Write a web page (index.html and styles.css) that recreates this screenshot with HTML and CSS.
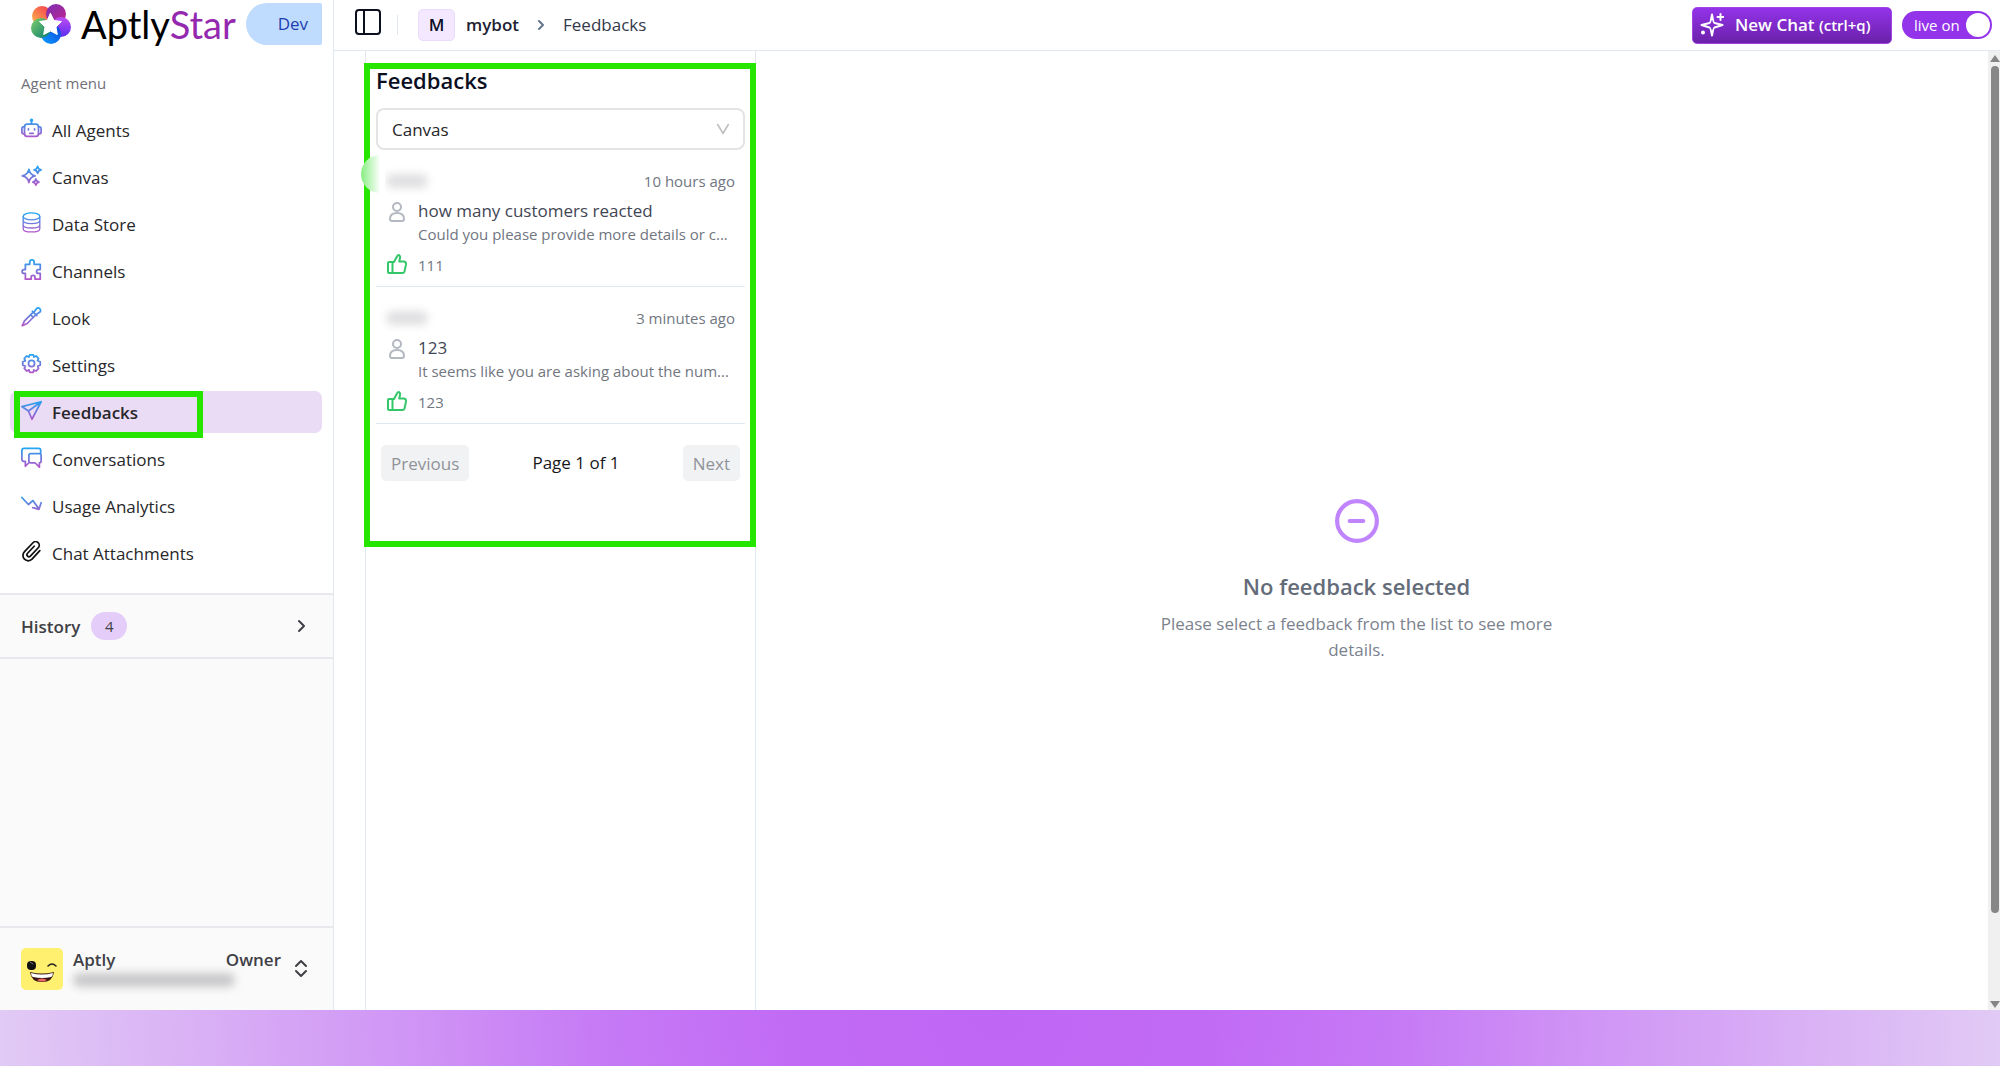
FILE: index.html
```
<!DOCTYPE html>
<html lang="en">
<head>
    <meta charset="UTF-8">
    <meta name="viewport" content="width=device-width, initial-scale=1.0">
    <title>AptlyStar - Feedbacks</title>
    <link rel="stylesheet" href="styles.css">
</head>
<body>
    <!-- Shared gradients for the menu icons -->
    <svg class="defs" width="0" height="0" aria-hidden="true">
        <defs>
            <linearGradient id="menuGrad" gradientUnits="userSpaceOnUse" x1="12" y1="1" x2="12" y2="23">
                <stop offset="0" stop-color="#1ea7f2"/>
                <stop offset="1" stop-color="#b655c9"/>
            </linearGradient>
        </defs>
    </svg>

    <div class="app">
        <aside class="sidebar">
            <div class="brand">
                <svg class="brand-mark" viewBox="0 0 40 40">
                    <defs>
                        <linearGradient id="g1" x1="0" y1="0" x2="1" y2="1"><stop offset="0" stop-color="#7a2fb5"/><stop offset="1" stop-color="#c0268b"/></linearGradient>
                        <linearGradient id="g2" x1="0" y1="0" x2="0" y2="1"><stop offset="0" stop-color="#c04bf5"/><stop offset="1" stop-color="#5b2ff0"/></linearGradient>
                        <linearGradient id="g3" x1="1" y1="0" x2="0" y2="1"><stop offset="0" stop-color="#0a3fd8"/><stop offset="1" stop-color="#0ea0ff"/></linearGradient>
                        <linearGradient id="g4" x1="0" y1="0" x2="1" y2="1"><stop offset="0" stop-color="#7fd06a"/><stop offset="1" stop-color="#087a72"/></linearGradient>
                        <linearGradient id="g5" x1="0" y1="1" x2="1" y2="0"><stop offset="0" stop-color="#ffc04a"/><stop offset="1" stop-color="#f2304f"/></linearGradient>
                    </defs>
                    <circle cx="11" cy="12" r="10" fill="url(#g5)"/>
                    <circle cx="25" cy="10" r="10" fill="url(#g1)"/>
                    <circle cx="30" cy="23" r="10" fill="url(#g2)"/>
                    <circle cx="20" cy="30" r="10" fill="url(#g3)"/>
                    <circle cx="10" cy="24" r="10" fill="url(#g4)"/>
                    <path d="M19.500 9.500l3.500 7 7.500 1-5.500 5.500 1.300 7.500-6.800-3.500-6.800 3.500 1.300-7.500-5.500-5.500 7.500-1z" fill="#fff" stroke="#fff" stroke-linejoin="round"/>
                </svg>
                <div class="brand-name">Aptly<span>Star</span>
                    <svg class="brand-spark" viewBox="0 0 16 16" fill="#f9a825">
                        <path d="M6 6q.6 3.600 4 4.500-3.400.6-4 4.500-.6-3.900-4-4.500 3.400-.9 4-4.500z"/>
                        <circle cx="8" cy="2" r="1"/><circle cx="13" cy="5" r="1.200"/>
                    </svg>
                </div>
                <span class="env">Dev</span>
            </div>

            <nav class="menu">
                <p class="menu-title">Agent menu</p>
                <a class="menu-item" href="#">
                    <svg class="icon" viewBox="0 0 24 24"><rect x="4" y="7" width="16" height="14" rx="3"/><path d="M12 7V3M4 10H3a2 2 0 0 0-2 2v4a2 2 0 0 0 2 2h1M20 10h1a2 2 0 0 1 2 2v4a2 2 0 0 1-2 2h-1M8.500 12.500v1M15.500 12.500v1M10 17.500h4"/><circle cx="12" cy="2.500" r="1"/></svg>
                    All Agents
                </a>
                <a class="menu-item" href="#">
                    <svg class="icon" viewBox="0 0 24 24"><path d="M9 5q1 6 7 7.500-6 1.500-7 7.500-1-6-7.500-7.500Q8 11 9 5zM19 1.500q.6 3.400 4 4-3.400.6-4 4-.6-3.400-4-4 3.400-.6 4-4zM17 16q.6 3 3.500 3.500Q17.600 20 17 23q-.6-3-3.500-3.500Q16.400 19 17 16z"/></svg>
                    Canvas
                </a>
                <a class="menu-item" href="#">
                    <svg class="icon thin" viewBox="0 0 24 24"><ellipse cx="12" cy="5" rx="9.500" ry="4"/><path d="M2.500 5v14c0 5 19 5 19 0V5M2.500 9.500c0 5 19 5 19 0M2.500 14.500c0 5 19 5 19 0"/></svg>
                    Data Store
                </a>
                <a class="menu-item" href="#">
                    <svg class="icon" viewBox="0 0 24 24"><path d="M5 6h5V3.500a2.500 2.500 0 0 1 5 0V6h7v6h-2a2 2 0 0 0 0 4.500h2V23h-6v-2a2.200 2.200 0 0 0-4.400 0v2H5v-6.500H3.500a2.200 2.200 0 0 1 0-4.500H5z"/></svg>
                    Channels
                </a>
                <a class="menu-item" href="#">
                    <svg class="icon" viewBox="0 0 24 24"><path d="M13 6l5 5M14.500 7.500l3.500-5a3 3 0 0 1 4 4l-5 3.500M14 7L4 17l-2.500 5.500L7 20l10-10M11 10l3 3"/></svg>
                    Look
                </a>
                <a class="menu-item" href="#">
                    <svg class="icon" viewBox="0 0 24 24"><circle cx="12" cy="12" r="3.500"/><path d="M10 2h4l.8 2.600 2.400-1.200 2.900 2.900-1.200 2.500L22 10v4l-3 1 1.100 2.700-2.900 2.900-2.600-1.200L14 22h-4l-.9-2.700-2.500 1.300-2.900-2.900L5 15l-3-1v-4l3-1-1.300-2.700 2.900-2.900L9 4.600z"/></svg>
                    Settings
                </a>
                <a class="menu-item active" href="#">
                    <svg class="icon" viewBox="0 0 24 24"><path d="M23 2L1 7.500l7.500 5L12.500 22zM8.500 12.500L23 2"/></svg>
                    Feedbacks
                </a>
                <a class="menu-item" href="#">
                    <svg class="icon" viewBox="0 0 24 24"><path d="M22.500 7.500V4a2.500 2.500 0 0 0-2.500-2.500H3.500A2.500 2.500 0 0 0 1 4v10a2.500 2.500 0 0 0 2.500 2.500H5V22l4-4M11 7.500h10a2 2 0 0 1 2 2V16a2 2 0 0 1-2 2v5l-5-5h-5a2 2 0 0 1-2-2V9.500a2 2 0 0 1 2-2z"/></svg>
                    Conversations
                </a>
                <a class="menu-item" href="#">
                    <svg class="icon" viewBox="0 0 24 24"><path d="M1 4l7.500 8 5-4.500 7 9.500M23 10l-2.500 7.500-7-2"/></svg>
                    Usage Analytics
                </a>
                <a class="menu-item" href="#">
                    <svg class="icon dark" viewBox="0 0 24 24"><path d="M15 6l-7.500 8a2.200 2.200 0 0 0 3.200 3.200l9-9.500a4 4 0 0 0-6-5.700L4 12.200a6 6 0 0 0 8.600 8.600L21.500 11"/></svg>
                    Chat Attachments
                </a>
            </nav>

            <button class="history" type="button">
                <span class="history-label">History</span>
                <span class="count">4</span>
                <svg class="chevron" viewBox="0 0 16 16"><path d="M6 3l5 5-5 5"/></svg>
            </button>

            <button class="user" type="button">
                <svg class="avatar" viewBox="0 0 42 42">
                    <rect width="42" height="42" rx="5" fill="#fff06f"/>
                    <rect x="6" y="13" width="9" height="9" rx="4" fill="#111"/>
                    <path d="M9 14l3 2" stroke="#777"/>
                    <path d="M27 18q4-4 8 0" fill="none" stroke="#222" stroke-width="1.500"/>
                    <path d="M9 24q12 3 24 0-1 10-12 10T9 24z" fill="#3a1512"/>
                    <path d="M10 25q11 3 22 0 0 3-2 4-9 2-18 0-2-1-2-4z" fill="#fff"/>
                    <path d="M16 32q5-3 10 0-5 3-10 0z" fill="#ef6a62"/>
                </svg>
                <span class="user-info">
                    <span class="user-row"><span>Aptly</span><span>Owner</span></span>
                    <span class="smudge email"></span>
                </span>
                <svg class="chevron" viewBox="0 0 16 24"><path d="M3 9l5-5 5 5M3 14l5 5 5-5"/></svg>
            </button>
        </aside>

        <div class="page">
            <header class="topbar">
                <button class="toggle-side" type="button" aria-label="Toggle sidebar">
                    <svg viewBox="0 0 28 28"><rect x="2" y="2" width="24" height="24" rx="3"/><path d="M10 2v24"/></svg>
                </button>
                <span class="divider"></span>
                <span class="bot-letter">M</span>
                <a class="bot-name" href="#">mybot</a>
                <svg class="crumb-arrow" viewBox="0 0 16 16"><path d="M6 4l4 4-4 4"/></svg>
                <span class="crumb">Feedbacks</span>

                <button class="new-chat" type="button">
                    <svg viewBox="0 0 24 24"><path d="M12 1.500q1.500 8.500 2.500 8.500l8 2-8 2.500q-1 0-2.500 8-1.500-8-2.500-8l-8-2.500 8-2q1 0 2.500-8.500zM20.500 1v6M17.500 4h6"/><circle cx="3" cy="19.500" r="1"/></svg>
                    <span>New Chat <small>(ctrl+q)</small></span>
                </button>
                <label class="live">live on <input type="checkbox" checked></label>
            </header>

            <div class="content">
                <main class="board">
                    <section class="list">
                        <h1>Feedbacks</h1>
                        <div class="select-wrap">
                            <select aria-label="Source"><option>Canvas</option></select>
                            <svg viewBox="0 0 16 16"><path d="M2 3l6 10 6-10"/></svg>
                        </div>

                        <article class="feedback">
                            <div class="feedback-top"><span class="smudge name"></span><time>10 hours ago</time></div>
                            <svg class="person" viewBox="0 0 16 20"><circle cx="8" cy="5" r="4"/><path d="M1 17q0-6 7-6t7 6q0 2-2 2H3q-2 0-2-2z"/></svg>
                            <h2>how many customers reacted</h2>
                            <p>Could you please provide more details or c...</p>
                            <svg class="thumb" viewBox="0 0 20 20"><path d="M1 9q0-1 1-1h5l3-5.500q.5-1.500 2-1.500 1.500 1 1 3l-.8 3.500H17q2.400.5 2 3l-1.500 7Q17 19 15.500 19H2q-1 0-1-1zM5.500 8v11"/></svg>
                            <div class="note">111</div>
                        </article>

                        <article class="feedback">
                            <div class="feedback-top"><span class="smudge name"></span><time>3 minutes ago</time></div>
                            <svg class="person" viewBox="0 0 16 20"><circle cx="8" cy="5" r="4"/><path d="M1 17q0-6 7-6t7 6q0 2-2 2H3q-2 0-2-2z"/></svg>
                            <h2>123</h2>
                            <p>It seems like you are asking about the num...</p>
                            <svg class="thumb" viewBox="0 0 20 20"><path d="M1 9q0-1 1-1h5l3-5.500q.5-1.500 2-1.500 1.500 1 1 3l-.8 3.500H17q2.400.5 2 3l-1.500 7Q17 19 15.500 19H2q-1 0-1-1zM5.500 8v11"/></svg>
                            <div class="note">123</div>
                        </article>

                        <div class="pager">
                            <button type="button" disabled>Previous</button>
                            <span>Page 1 of 1</span>
                            <button type="button" disabled>Next</button>
                        </div>
                        <div class="highlight"></div>
                        <div class="blob"></div>
                    </section>

                    <section class="empty">
                        <svg viewBox="0 0 44 44"><circle cx="22" cy="22" r="19"/><path d="M15 22h13"/></svg>
                        <h2>No feedback selected</h2>
                        <p>Please select a feedback from the list to see more details.</p>
                    </section>
                </main>

                <div class="scrollbar">
                    <span class="arrow-up"></span>
                    <span class="track"><span class="handle"></span></span>
                    <span class="arrow-down"></span>
                </div>
            </div>
        </div>
    </div>
    <div class="glow"></div>
</body>
</html>
```

FILE: styles.css
```
*, *::after {
    box-sizing: border-box;
}

body {
    margin: 0;
    height: 100vh;
    display: flex;
    flex-direction: column;
    font-family: "Open Sans", "Noto Sans", sans-serif;
    font-size: 17px;
    line-height: 26px;
    color: #27272a;
    background-color: #fff;
}

h1, h2, p {
    margin: 0;
    font-weight: 400;
}

button, select {
    font: inherit;
    color: inherit;
}

button {
    border: none;
    background: none;
    padding: 0;
    cursor: pointer;
}

a {
    color: inherit;
    text-decoration: none;
}

svg {
    flex: none;
    fill: none;
    stroke-linecap: round;
    stroke-linejoin: round;
}

.defs {
    position: absolute;
}

.app {
    flex: 1;
    display: flex;
    min-height: 0;
}

/* Sidebar */
.sidebar {
    width: 334px;
    flex: none;
    display: flex;
    flex-direction: column;
    background-color: #fafafa;
    border-right: 1px solid #e2e8f0;
}

.brand {
    display: flex;
    align-items: center;
    height: 50px;
    padding: 0 11px 2px 31px;
    background-color: #fff;
}

.brand-mark {
    width: 40px;
    height: 40px;
}

.brand-name {
    position: relative;
    flex: 1;
    margin-left: 10px;
    font-family: Lato, sans-serif;
    font-size: 38px;
    line-height: 40px;
    color: #000;
}

.brand-name span {
    color: #9429b0;
}

.brand-spark {
    position: absolute;
    left: 136px;
    top: 0;
    width: 16px;
    height: 16px;
}

.env {
    width: 76px;
    height: 42px;
    padding-right: 14px;
    border-radius: 21px 2px 2px 21px;
    background-color: #bfdbfe;
    color: #1e40af;
    line-height: 42px;
    text-align: right;
}

.menu {
    display: flex;
    flex-direction: column;
    gap: 5px;
    padding: 20px 11px 19px 10px;
    background-color: #fff;
}

.menu-title {
    padding-left: 11px;
    margin-bottom: 8px;
    font-size: 15px;
    color: #71717a;
}

.menu-item {
    position: relative;
    display: flex;
    align-items: center;
    gap: 10px;
    height: 42px;
    padding: 2px 0 0 11px;
    border-radius: 7px;
}

.menu-item.active {
    background-color: #ebdcf6;
    font-weight: 600;
}

/* Green marker around the active entry */
.menu-item.active::after {
    content: "";
    position: absolute;
    left: 4px;
    top: 0;
    width: 189px;
    height: 47px;
    border: 6px solid #26e600;
}

.icon {
    width: 21px;
    height: 21px;
    margin-top: -5px;
    stroke: url(#menuGrad);
    stroke-width: 2;
}

.icon.thin {
    stroke-width: 1.5;
}

.icon.dark {
    stroke: #111;
}

.chevron {
    width: 16px;
    height: 16px;
    margin-left: auto;
    stroke: #3f3f46;
    stroke-width: 2;
}

.history {
    display: flex;
    align-items: center;
    height: 66px;
    padding: 0 24px 0 21px;
    border-top: 2px solid #e8e9ed;
    border-bottom: 2px solid #e8e9ed;
    color: #3f3f46;
}

.history-label {
    padding-top: 2px;
    font-weight: 600;
}

.count {
    width: 36px;
    height: 28px;
    margin-left: 11px;
    border-radius: 14px;
    background-color: #e4cdf8;
    font-size: 15px;
    line-height: 28px;
}

.user {
    display: flex;
    align-items: center;
    height: 84px;
    margin-top: auto;
    padding: 0 24px 0 21px;
    border-top: 2px solid #e8e9ed;
    color: #3f3f46;
    font-weight: 600;
}

.avatar {
    width: 42px;
    height: 42px;
}

.user-info {
    flex: 1;
    margin-left: 10px;
    align-self: flex-start;
    padding-top: 19px;
}

.user-row {
    display: flex;
    justify-content: space-between;
    padding-right: 12px;
}

.user .chevron {
    height: 24px;
}

.smudge {
    display: block;
    filter: blur(4px);
    border-radius: 8px;
}

.smudge.email {
    width: 162px;
    height: 14px;
    background-color: #c8c8ca;
}

.smudge.name {
    width: 42px;
    height: 14px;
    background-color: #dfdfe1;
}

/* Top bar */
.page {
    flex: 1;
    display: flex;
    flex-direction: column;
    min-width: 0;
}

.topbar {
    display: flex;
    align-items: center;
    height: 51px;
    padding: 0 8px 0 20px;
    border-bottom: 1px solid #e2e8f0;
    flex: none;
}

.toggle-side svg {
    display: block;
    width: 28px;
    height: 28px;
    stroke: #0b0f1f;
    stroke-width: 2;
}

.toggle-side {
    margin-bottom: 6px;
}

.divider {
    width: 1px;
    height: 20px;
    margin: 0 20px 0 15px;
    background-color: #e2e8f0;
}

.bot-letter {
    width: 37px;
    height: 32px;
    border: 1px solid #eadcfc;
    border-radius: 5px;
    background-color: #f3e8ff;
    color: #0b0f1f;
    font-weight: 600;
    line-height: 30px;
    text-align: center;
}

.bot-name {
    margin-left: 11px;
    color: #1e2233;
    font-weight: 600;
}

.crumb-arrow {
    width: 16px;
    height: 16px;
    margin: 0 14px;
    stroke: #64748b;
    stroke-width: 2;
}

.crumb {
    color: #33384a;
}

.new-chat {
    display: flex;
    align-items: center;
    width: 200px;
    height: 37px;
    margin-left: auto;
    padding-left: 7px;
    border: 1px solid #a044e8;
    border-radius: 5px;
    background-image: linear-gradient(#9333ea, #6b21a8);
    color: #fff;
    font-weight: 600;
    white-space: nowrap;
}

.new-chat svg {
    width: 24px;
    height: 24px;
    margin-right: 11px;
    stroke: #fff;
    stroke-width: 2;
}

.new-chat small {
    font-size: 15px;
}

.live {
    display: flex;
    align-items: center;
    justify-content: space-between;
    width: 90px;
    height: 28px;
    margin-left: 10px;
    padding: 0 2px 0 12px;
    border-radius: 14px;
    background-color: #9333ea;
    color: #fff;
    font-size: 15px;
    cursor: pointer;
}

.live input {
    appearance: none;
    width: 24px;
    height: 24px;
    margin: 0;
    border-radius: 50%;
    background-color: #fff;
}

/* Content */
.content {
    flex: 1;
    display: flex;
    min-height: 0;
}

.board {
    flex: 1;
    display: flex;
    padding: 0 31px;
}

.list {
    position: relative;
    width: 391px;
    flex: none;
    padding: 14px 10px 0;
    border: solid #e2e8f0;
    border-width: 0 1px;
}

.list h1 {
    font-size: 22px;
    line-height: 30px;
    font-weight: 600;
    color: #0b0f1f;
}

.select-wrap {
    position: relative;
    margin-top: 13px;
}

.select-wrap select {
    display: block;
    width: 100%;
    height: 42px;
    padding: 1px 14px 0;
    border: 2px solid #e4e4e4;
    border-radius: 8px;
    background-color: #fff;
    appearance: none;
}

.select-wrap svg {
    position: absolute;
    right: 15px;
    top: 14px;
    width: 14px;
    height: 14px;
    stroke: #bfbfbf;
    stroke-width: 2;
    pointer-events: none;
}

.feedback {
    display: grid;
    grid-template-columns: 21px 1fr;
    column-gap: 11px;
    padding: 20px 10px 10px;
    border-bottom: 1px solid #e2e8f0;
    color: #71767f;
    font-size: 15px;
}

.feedback-top {
    grid-column: 1 / 3;
    display: flex;
    align-items: center;
    justify-content: space-between;
    margin-bottom: 6px;
    line-height: 22px;
}

.feedback h2 {
    font-size: 17px;
    line-height: 26px;
    color: #3f4654;
}

.feedback p {
    grid-column: 2;
    line-height: 20px;
    font-size: 15px;
    white-space: nowrap;
}

.person {
    width: 16px;
    height: 20px;
    margin: 4px 0 0 3px;
    stroke: #b4b8c0;
    stroke-width: 2;
}

.thumb {
    width: 20px;
    height: 20px;
    margin: 10px 0 0 1px;
    stroke: #34c769;
    stroke-width: 2;
}

.note {
    margin-top: 10px;
    line-height: 22px;
}

.pager {
    display: flex;
    align-items: center;
    justify-content: space-between;
    padding: 21px 5px 0;
    color: #18181b;
}

.pager button {
    height: 36px;
    padding: 1px 10px 0;
    border-radius: 5px;
    background-color: #f1f2f4;
    color: #8f9299;
}

/* Green marker around the whole list */
.highlight {
    position: absolute;
    left: -2px;
    top: 12px;
    width: 392px;
    height: 484px;
    border: 6px solid #26e600;
    pointer-events: none;
}

.blob {
    position: absolute;
    left: -5px;
    top: 104px;
    width: 24px;
    height: 38px;
    border-radius: 19px 0 0 19px;
    background-image: linear-gradient(to right, #86ee82, #fff 80%);
}

.empty {
    flex: 1;
    display: flex;
    flex-direction: column;
    align-items: center;
    padding-top: 447px;
    color: #7b828e;
    text-align: center;
}

.empty svg {
    width: 46px;
    height: 46px;
    stroke: #c084fc;
    stroke-width: 4;
}

.empty h2 {
    margin: 27px 0 10px;
    color: #646c7a;
    font-size: 22px;
    line-height: 30px;
    font-weight: 600;
}

.empty p {
    max-width: 420px;
}

/* Scrollbar */
.scrollbar {
    display: flex;
    flex-direction: column;
    align-items: flex-end;
    width: 12px;
    padding: 4px 0 2px;
    background-color: #f0f0f0;
}

.arrow-up, .arrow-down {
    border: solid transparent;
    border-width: 0 5px;
}

.arrow-up {
    border-bottom: 7px solid #858585;
}

.arrow-down {
    border-top: 7px solid #858585;
}

.track {
    flex: 1;
    width: 9px;
    padding: 4px 1px 4px 0;
}

.handle {
    display: block;
    height: 91%;
    border-radius: 4px;
    background-color: #878787;
}

/* Purple strip under the app */
.glow {
    height: 56px;
    flex: none;
    background-image: radial-gradient(circle farthest-side at 50% 0, #c066f5 0, #c16af5 20%, #c67af5 40%, #d096f5 60%, #d9b0f5 80%, #e1caf5 100%);
}
```
